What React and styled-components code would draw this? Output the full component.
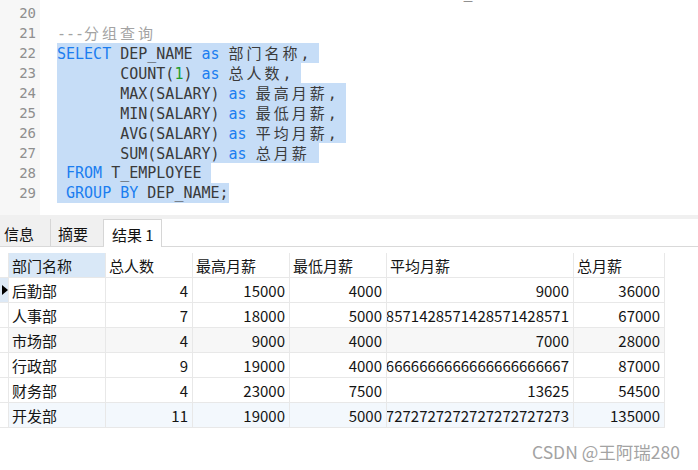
import React from "react";
import styled, { createGlobalStyle } from "styled-components";

const GlobalStyle = createGlobalStyle`
    body {
        margin: 0;
        background: #ffffff;
        overflow: hidden;
    }
`

const Page = styled.div`
    width: 698px;
    height: 470px;
    position: relative;
    display: flex;
    flex-direction: column;
    background: #ffffff;
    font-family: "Noto Sans CJK SC", "Noto Sans", sans-serif;
`

//editor
const Editor = styled.div`
    height: 215px;
    display: flex;
    overflow: hidden;
    flex-shrink: 0;
`
const Gutter = styled.div`
    width: 40px;
    background: #f7f7f7;
    flex-shrink: 0;
`
const Scrolled = styled.div`
    margin-top: -17px;
`
const LineNo = styled.div`
    height: 20px;
    line-height: 20px;
    padding-right: 4px;
    text-align: right;
    font-family: "DejaVu Sans Mono", monospace;
    font-size: 14px;
    color: #8e8e8e;
`
const Code = styled(Scrolled)`
    padding-left: 17px;
    font-family: "DejaVu Sans Mono", monospace;
    font-size: 15px;
    color: #3a3a3a;
`
const Line = styled.div`
    height: 20px;
    line-height: 20px;
    white-space: pre;
`
const Sel = styled.span`
    display: inline-block;
    height: 20px;
    vertical-align: top;
    background: ${p => (p.$on ? "#c6ddf7" : "transparent")};
    padding-right: ${p => (p.$tail ? "9px" : "0")};
`
const Kw = styled.span`
    color: #1b7df0;
`
const Num = styled.span`
    color: #1f9e2c;
`
const Comment = styled.span`
    color: #a3a3a3;
`
const Wide = styled.span`
    font-family: "Noto Sans CJK SC", sans-serif;
    letter-spacing: 3px;
`

//tabs
const Strip = styled.div`
    height: 4px;
    background: #f0f0f0;
    flex-shrink: 0;
`
const TabBar = styled.div`
    height: 27px;
    display: flex;
    border-bottom: 1px solid #d9d9d9;
    flex-shrink: 0;
`
const Tab = styled.div`
    width: ${p => p.$w}px;
    box-sizing: border-box;
    padding: 2px 0 0 ${p => p.$pad}px;
    font-size: 15px;
    line-height: 25px;
    color: #111111;
    background: ${p => (p.$active ? "#ffffff" : "#f0f0f0")};
    border-right: 1px solid #d6d6d6;
    border-top: ${p => (p.$active ? "1px solid #d6d6d6" : "none")};
    margin-bottom: ${p => (p.$active ? "-1px" : "0")};
    height: ${p => (p.$active ? "28px" : "27px")};
`

//grid
const Grid = styled.div`
    margin-top: 6px;
    display: grid;
    grid-template-columns: 9px 97px 87px 97px 97px 187px 91px;
    width: 665px;
`
const Cell = styled.div`
    box-sizing: border-box;
    height: 25px;
    border-right: 1px solid #e8e8e8;
    border-bottom: 1px solid #e8e8e8;
    display: flex;
    align-items: center;
    justify-content: ${p => (p.$right ? "flex-end" : "flex-start")};
    padding: 0 4px 0 3px;
    overflow: hidden;
    white-space: nowrap;
    font-size: 15px;
    color: #141414;
    background: ${p => p.$bg || "#ffffff"};
`
const HeadCell = styled(Cell)`
    background: ${p => (p.$focus ? "#d9e8f7" : "#ffffff")};
`
const Marker = styled(Cell)`
    padding: 0;
    justify-content: center;
    background: ${p => (p.$current ? "#dde9f6" : "#ffffff")};
`
const Arrow = styled.span`
    width: 0;
    height: 0;
    border-top: 5px solid transparent;
    border-bottom: 5px solid transparent;
    border-left: 6px solid #000000;
    margin-left: 2px;
`

const Watermark = styled.div`
    position: absolute;
    left: 532px;
    top: 439px;
    font-size: 17.5px;
    line-height: 26px;
    color: #a3a3a3;
    white-space: nowrap;
`

const headers = ["部门名称", "总人数", "最高月薪", "最低月薪", "平均月薪", "总月薪"]

const rows = [
    ["后勤部", "4", "15000", "4000", "9000", "36000"],
    ["人事部", "7", "18000", "5000", "9571.428571428571428571428571428571428571", "67000"],
    ["市场部", "4", "9000", "4000", "7000", "28000"],
    ["行政部", "9", "19000", "4000", "9666.666666666666666666666666666666666667", "87000"],
    ["财务部", "4", "23000", "7500", "13625", "54500"],
    ["开发部", "11", "19000", "5000", "12272.727272727272727272727272727272727273", "135000"],
]

const rowBg = ["#ffffff", "#ffffff", "#f7f7f7", "#ffffff", "#ffffff", "#f3f8fd"]

export default function App() {
    const numbers = []
    for (let n = 19; n <= 29; n++) numbers.push(n)

    return (
        <Page>
            <GlobalStyle />
            <Editor>
                <Gutter>
                    <Scrolled>
                        {numbers.map(n => (
                            <LineNo key={n}>{n === 19 ? "" : n}</LineNo>
                        ))}
                    </Scrolled>
                </Gutter>
                <Code>
                    <Line>{"                                             _        ,"}</Line>
                    <Line> </Line>
                    <Line><Comment>---<Wide>分组查询</Wide></Comment></Line>
                    <Line>
                        <Sel $on $tail><Kw>SELECT</Kw> DEP_NAME <Kw>as</Kw> <Wide>部门名称</Wide>,</Sel>
                    </Line>
                    <Line>
                        <Sel $on $tail>{"       "}COUNT(<Num>1</Num>) <Kw>as</Kw> <Wide>总人数</Wide>,</Sel>
                    </Line>
                    <Line>
                        <Sel $on $tail>{"       "}MAX(SALARY) <Kw>as</Kw> <Wide>最高月薪</Wide>,</Sel>
                    </Line>
                    <Line>
                        <Sel $on $tail>{"       "}MIN(SALARY) <Kw>as</Kw> <Wide>最低月薪</Wide>,</Sel>
                    </Line>
                    <Line>
                        <Sel $on $tail>{"       "}AVG(SALARY) <Kw>as</Kw> <Wide>平均月薪</Wide>,</Sel>
                    </Line>
                    <Line>
                        <Sel $on $tail>{"       "}SUM(SALARY) <Kw>as</Kw> <Wide>总月薪</Wide></Sel>
                    </Line>
                    <Line>
                        <Sel $on $tail>{" "}<Kw>FROM</Kw> T_EMPLOYEE</Sel>
                    </Line>
                    <Line>
                        <Sel $on>{" "}<Kw>GROUP BY</Kw> DEP_NAME;</Sel>
                    </Line>
                </Code>
            </Editor>

            <Strip />
            <TabBar>
                <Tab $w={51} $pad={4}>信息</Tab>
                <Tab $w={53} $pad={7}>摘要</Tab>
                <Tab $w={58} $pad={8} $active>结果 1</Tab>
            </TabBar>

            <Grid>
                <Marker />
                {headers.map((h, i) => (
                    <HeadCell key={h} $focus={i === 0}>{h}</HeadCell>
                ))}
                {rows.map((r, ri) => (
                    <React.Fragment key={r[0]}>
                        <Marker $current={ri === 0}>{ri === 0 && <Arrow />}</Marker>
                        {r.map((v, ci) => (
                            <Cell key={ci} $right={ci > 0} $bg={rowBg[ri]}>
                                {v}
                            </Cell>
                        ))}
                    </React.Fragment>
                ))}
            </Grid>

            <Watermark>CSDN @王阿瑞280</Watermark>
        </Page>
    )
}
